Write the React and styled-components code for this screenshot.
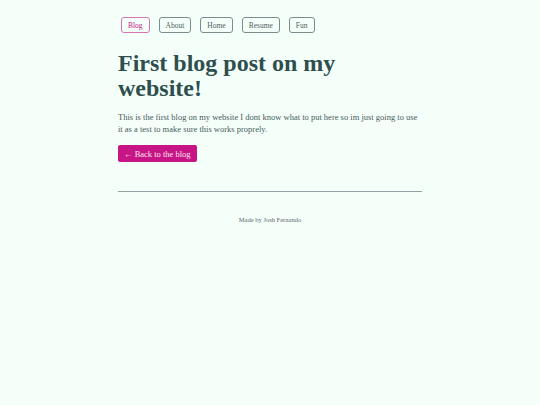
import React from 'react'
import styled, { createGlobalStyle } from 'styled-components'

const GlobalStyle = createGlobalStyle`
  body {
    margin: 0;
    background: #f5fffa;
    font-family: Georgia, 'Liberation Serif', serif;
    color: #2f4f4f;
  }
`

const Page = styled.div`
  width: 304px;
  margin: 0 auto;
  padding-top: 17px;
`

const Nav = styled.nav`
  display: flex;
  gap: 9px;
  margin-left: 3px;
`

const NavLink = styled.a`
  display: inline-flex;
  align-items: center;
  height: 16px;
  padding: 0 6px;
  border: 1px solid ${(p) => (p.active ? '#d874b0' : '#7b8c8c')};
  border-radius: 3px;
  font-size: 7.5px;
  color: ${(p) => (p.active ? '#c71585' : '#4b5e5e')};
  text-decoration: none;
  box-sizing: border-box;
`

const Title = styled.h1`
  margin: 18px 0 0;
  font-size: 24px;
  line-height: 25px;
  font-weight: bold;
  color: #2f4f4f;
`

const Body = styled.p`
  margin: 11px 0 0;
  font-size: 8.5px;
  line-height: 11.5px;
  color: #475a5a;
`

const BackButton = styled.a`
  display: inline-flex;
  align-items: center;
  margin-top: 10px;
  height: 17px;
  padding: 0 6px;
  background: #c71585;
  border-radius: 2px;
  color: #fce4f1;
  font-size: 8.5px;
  text-decoration: none;
`

const Rule = styled.hr`
  margin: 29px 0 0;
  border: none;
  border-top: 1px solid #93a3a5;
`

const Footer = styled.footer`
  margin-top: 24px;
  text-align: center;
  font-size: 6.5px;
  color: #566868;
`

const links = ['Blog', 'About', 'Home', 'Resume', 'Fun']

const App = () => {
  return (
    <>
      <GlobalStyle />
      <Page>
        <Nav>
          {links.map((l) => (
            <NavLink key={l} href='#' active={l === 'Blog' ? 1 : 0}>
              {l}
            </NavLink>
          ))}
        </Nav>
        <Title>First blog post on my website!</Title>
        <Body>
          This is the first blog on my website I dont know what to put here so
          im just going to use it as a test to make sure this works proprely.
        </Body>
        <BackButton href='#'>← Back to the blog</BackButton>
        <Rule />
        <Footer>Made by Josh Fernando</Footer>
      </Page>
    </>
  )
}

export default App
